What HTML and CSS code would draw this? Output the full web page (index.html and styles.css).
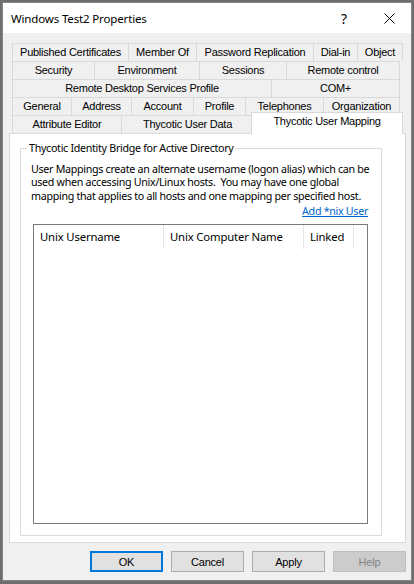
FILE: index.html
```html
<!DOCTYPE html>
<html>
<head>
<meta charset="utf-8">
<link rel="stylesheet" href="styles.css">
</head>
<body>
<div class="window">
  <div class="titlebar">
    <div class="title">Windows Test2 Properties</div>
    <div class="tb-btn help">?</div>
    <div class="tb-btn close"><svg width="11" height="11" viewBox="0 0 11 11"><path d="M0.5 0.5L10.5 10.5M10.5 0.5L0.5 10.5" stroke="#000" stroke-width="1" fill="none"/></svg></div>
  </div>
  <div class="content">
    <div class="tabs">
      <div class="row r1">
        <div class="tab">Published Certificates</div>
        <div class="tab">Member Of</div>
        <div class="tab">Password Replication</div>
        <div class="tab">Dial-in</div>
        <div class="tab last">Object</div>
      </div>
      <div class="row r2">
        <div class="tab">Security</div>
        <div class="tab">Environment</div>
        <div class="tab">Sessions</div>
        <div class="tab last">Remote control</div>
      </div>
      <div class="row r3">
        <div class="tab">Remote Desktop Services Profile</div>
        <div class="tab last">COM+</div>
      </div>
      <div class="row r4">
        <div class="tab">General</div>
        <div class="tab">Address</div>
        <div class="tab">Account</div>
        <div class="tab">Profile</div>
        <div class="tab">Telephones</div>
        <div class="tab last">Organization</div>
      </div>
      <div class="row r5">
        <div class="tab">Attribute Editor</div>
        <div class="tab">Thycotic User Data</div>
        <div class="tab last sel">Thycotic User Mapping</div>
      </div>
    </div>
    <div class="panel">
      <fieldset class="group">
        <legend>Thycotic Identity Bridge for Active Directory</legend>
        <p class="desc">User Mappings create an alternate username (logon alias) which can be<br>used when accessing Unix/Linux hosts.&nbsp; You may have one global<br>mapping that applies to all hosts and one mapping per specified host.</p>
        <div class="linkrow"><a class="link">Add *nix User</a></div>
        <div class="list">
          <div class="lv-head">
            <div class="col c1">Unix Username</div>
            <div class="col c2">Unix Computer Name</div>
            <div class="col c3">Linked</div>
          </div>
        </div>
      </fieldset>
    </div>
    <div class="buttons">
      <div class="btn default">OK</div>
      <div class="btn">Cancel</div>
      <div class="btn">Apply</div>
      <div class="btn disabled">Help</div>
    </div>
  </div>
</div>
</body>
</html>
```
FILE: styles.css
```css
* { box-sizing: border-box; }
html, body { margin: 0; padding: 0; }
body {
  width: 414px;
  height: 584px;
  overflow: hidden;
  background: #6e6e6e;
  font-family: "Noto Sans", "Open Sans", sans-serif;
  font-size: 11.5px;
  color: #000;
}
.window {
  margin: 2px 0 0 2px;
  width: 410px;
  height: 579px;
  border: 1px solid #858585;
  background: #f0f0f0;
  display: flex;
  flex-direction: column;
}
.titlebar {
  height: 30px;
  background: #fff;
  display: flex;
  align-items: center;
  flex: 0 0 auto;
}
.title {
  flex: 1;
  padding-left: 8px;
  letter-spacing: -0.15px;
}
.tb-btn {
  height: 30px;
  display: flex;
  align-items: center;
  justify-content: center;
}
.help { width: 46px; font-size: 14px; }
.close { width: 44px; }
.content {
  flex: 1;
  display: flex;
  flex-direction: column;
  padding: 10px 5px 0 6px;
}
.tabs {
  padding-left: 3px;
  font-family: "Liberation Sans", Arial, sans-serif;
  font-size: 11px;
  letter-spacing: -0.25px;
}
.row {
  display: grid;
  height: 18px;
}
.r1 { grid-template-columns: 116px 68px 117px 44px 46px; }
.r2 { grid-template-columns: 82px 105px 87px 114px; }
.r3 { grid-template-columns: 259px 129px; }
.r4 { grid-template-columns: 59px 60px 62px 52px 78px 77px; }
.r5 { grid-template-columns: 109px 132px 148px; }
.tab {
  border-top: 1px solid #d9d9d9;
  border-left: 1px solid #d9d9d9;
  background: #f0f0f0;
  text-align: center;
  line-height: 17px;
  white-space: nowrap;
  overflow: hidden;
}
.tab.last { border-right: 1px solid #d9d9d9; }
.tab.sel {
  position: relative;
  z-index: 1;
  background: #fff;
  margin: -3px -2px -1px -2px;
  line-height: 17px;
}
.panel {
  height: 410px;
  background: #fff;
  border: 1px solid #d9d9d9;
  flex: 0 0 auto;
  font-size: 10.7px;
  letter-spacing: -0.3px;
}
.group {
  margin: 6px 0 0 10px;
  width: 362px;
  padding: 0 13px 11px 12px;
  border: 1px solid #dcdcdc;
  min-width: 0;
}
.group legend {
  margin-left: -6px;
  padding: 0 2px;
  line-height: 16px;
}
.desc {
  margin: 7px 0 0 -2px;
  line-height: 13.33px;
  white-space: nowrap;
}
.linkrow {
  margin-top: 1px;
  line-height: 14px;
  text-align: right;
}
.link {
  color: #0066cc;
  text-decoration: underline;
}
.list {
  margin-top: 6px;
  height: 300px;
  border: 1px solid #7a7a7a;
  background: #fff;
}
.lv-head {
  display: flex;
  height: 24px;
  font-size: 11.3px;
  letter-spacing: -0.15px;
}
.col {
  border-right: 1px solid #e5e5e5;
  padding-left: 6px;
  line-height: 24px;
  white-space: nowrap;
}
.c1 { width: 130px; }
.c2 { width: 140px; }
.c3 { width: 50px; }
.buttons {
  margin-top: 8px;
  display: flex;
  justify-content: flex-end;
  gap: 8px;
}
.btn {
  width: 73px;
  height: 21px;
  background: #e1e1e1;
  border: 1px solid #adadad;
  font-family: "Liberation Sans", Arial, sans-serif;
  font-size: 11px;
  letter-spacing: -0.2px;
  display: flex;
  align-items: center;
  justify-content: center;
}
.btn.default { border: 2px solid #0078d7; }
.btn.disabled { background: #cccccc; border-color: #bfbfbf; color: #838383; }
```
